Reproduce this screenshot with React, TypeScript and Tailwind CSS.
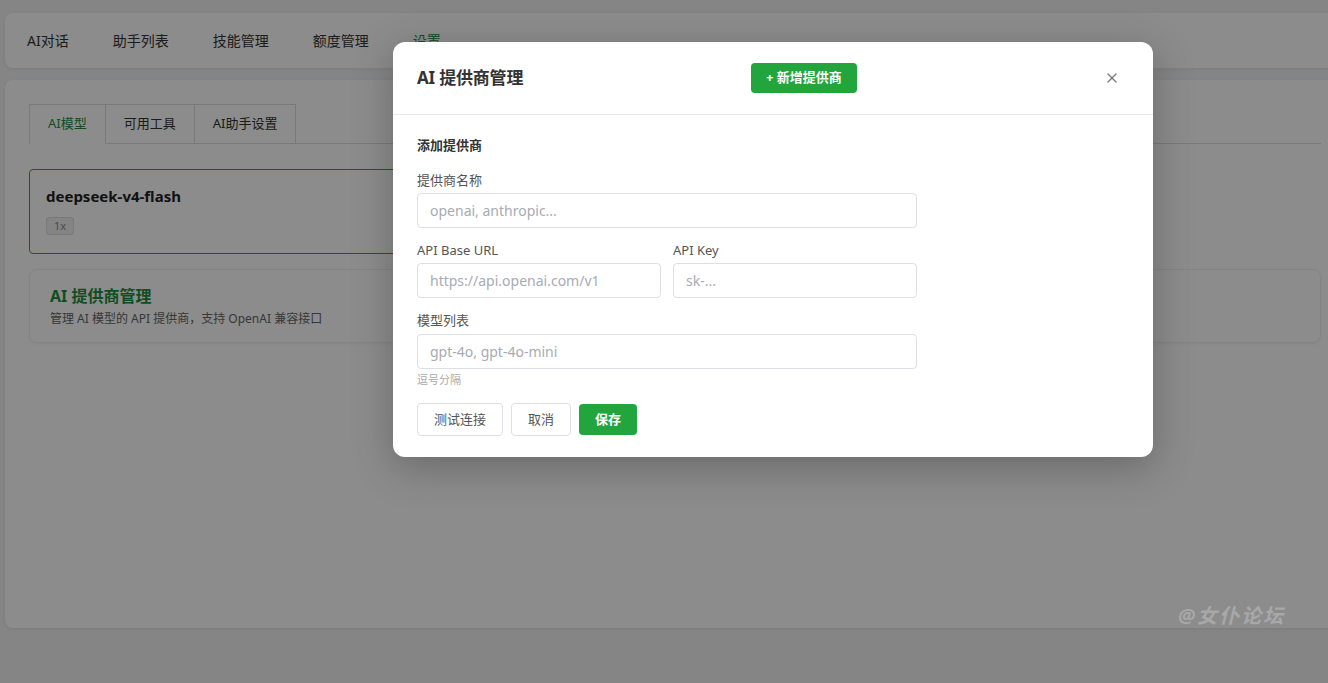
import { useState } from "react";
import { X } from "lucide-react";

const navItems = ["AI对话", "助手列表", "技能管理", "额度管理", "设置"];
const tabs = ["AI模型", "可用工具", "AI助手设置"];

const inputClass =
  "h-[35px] w-full rounded-[4px] border border-[#dcdfe6] bg-white px-[12px] text-[14px] text-[#333] outline-none placeholder:text-[#a8abb2]";

const Field = ({ label, placeholder }: { label: string; placeholder: string }) => (
  <div className="flex flex-col">
    <label className="mb-[4px] text-[13px] leading-[18px] text-[#555]">{label}</label>
    <input className={inputClass} placeholder={placeholder} />
  </div>
);

const ProviderModal = () => {
  return (
    <div className="absolute left-[393px] top-[42px] z-20 w-[760px] rounded-[12px] bg-white shadow-[0_10px_40px_rgba(0,0,0,0.25)]">
      <div className="flex h-[73px] items-center border-b border-[#ebebeb] px-6">
        <h2 className="w-[334px] text-[17px] font-bold tracking-[-0.2px] text-[#333]">AI 提供商管理</h2>
        <button className="h-[30px] rounded-[4px] bg-[#22a53d] px-[15px] text-[13px] font-bold text-white">
          + 新增提供商
        </button>
        <button className="ml-auto mr-[5px] flex h-[24px] w-[24px] items-center justify-center text-[#777]">
          <X size={16} strokeWidth={1.8} />
        </button>
      </div>
      <div className="px-6 pb-[21px] pt-[21px]">
        <h3 className="text-[13px] font-bold leading-[18px] text-[#333]">添加提供商</h3>
        <div className="mt-[17px] w-[500px]">
          <Field label="提供商名称" placeholder="openai, anthropic..." />
          <div className="mt-[13px] grid grid-cols-2 gap-[12px]">
            <Field label="API Base URL" placeholder="https://api.openai.com/v1" />
            <Field label="API Key" placeholder="sk-..." />
          </div>
          <div className="mt-[13px] flex flex-col">
            <label className="mb-[5px] text-[13px] leading-[18px] text-[#555]">模型列表</label>
            <input className={inputClass} placeholder="gpt-4o, gpt-4o-mini" />
            <span className="mt-[4px] text-[11px] leading-[14px] text-[#aaa]">逗号分隔</span>
          </div>
          <div className="mt-[16px] flex items-center gap-[8px]">
            <button className="h-[33px] rounded-[4px] border border-[#dcdfe6] bg-white px-[16px] text-[13px] text-[#555]">
              测试连接
            </button>
            <button className="h-[33px] rounded-[4px] border border-[#dcdfe6] bg-white px-[16px] text-[13px] text-[#555]">
              取消
            </button>
            <button className="h-[31px] rounded-[4px] bg-[#22a53d] px-[16px] text-[13px] font-bold text-white">
              保存
            </button>
          </div>
        </div>
      </div>
    </div>
  );
};

export default function App() {
  const [activeTab, setActiveTab] = useState(0);

  return (
    <div
      className="relative h-[683px] w-full overflow-hidden bg-[#f2f3f5]"
      style={{ fontFamily: '"Noto Sans", "Noto Sans CJK SC", sans-serif' }}
    >
      <div className="flex flex-col gap-[12px] pl-[5px] pt-[13px]">
        {/* top navigation */}
        <nav className="flex h-[55px] w-[1340px] items-center rounded-[8px] bg-white shadow-[0_1px_4px_rgba(0,0,0,0.08)]">
          {navItems.map((item, i) => (
            <span
              key={item}
              className={`px-[22px] text-[14px] ${i === 4 ? "text-[#1e8e3e]" : "text-[#333]"}`}
            >
              {item}
            </span>
          ))}
        </nav>

        {/* settings panel */}
        <section className="h-[548px] w-[1340px] rounded-[8px] bg-white p-6 shadow-[0_1px_4px_rgba(0,0,0,0.08)]">
          <div className="flex border-b border-[#dcdcdc]">
            {tabs.map((tab, i) => (
              <button
                key={tab}
                onClick={() => setActiveTab(i)}
                className={`-mb-px h-[40px] border border-[#dcdcdc] px-[18px] text-[13px] ${
                  i > 0 ? "border-l-0" : ""
                } ${i === activeTab ? "border-b-white text-[#1e8e3e]" : "text-[#333]"}`}
              >
                {tab}
              </button>
            ))}
          </div>

          <div className="mt-[25px] w-[560px] rounded-[4px] border border-[#2da84a] px-4 pb-[17px] pt-[15px]">
            <div className="text-[15px] font-bold leading-[22px] text-[#222]">deepseek-v4-flash</div>
            <span className="mt-[10px] inline-flex h-[18px] items-center rounded-[3px] border border-[#ddd] bg-[#f0f0f0] px-[7px] text-[11px] text-[#888]">
              1x
            </span>
          </div>

          <div className="mt-[15px] h-[74px] rounded-[8px] border border-[#f0f0f0] px-[20px] pt-[15px] shadow-[0_1px_3px_rgba(0,0,0,0.05)]">
            <div className="text-[16px] font-bold leading-[22px] text-[#1e8e3e]">AI 提供商管理</div>
            <div className="mt-[3px] text-[12px] leading-[18px] text-[#666]">
              管理 AI 模型的 API 提供商，支持 OpenAI 兼容接口
            </div>
          </div>
        </section>
      </div>

      {/* dimmed backdrop */}
      <div className="absolute inset-0 z-10 bg-black/45" />

      <ProviderModal />

      <div className="absolute left-[1178px] top-[601px] z-30 text-[20px] font-bold italic tracking-[2px] text-white/25">
        @女仆论坛
      </div>
    </div>
  );
}
